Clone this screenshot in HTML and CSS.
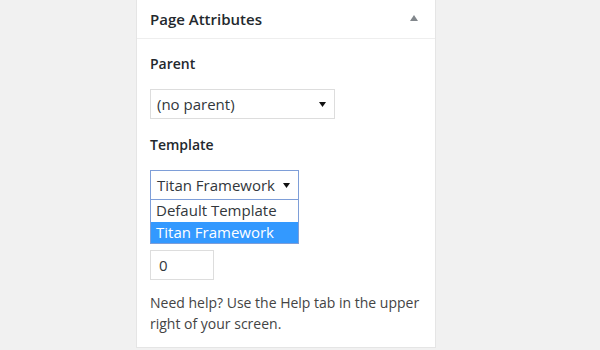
FILE: index.html
```html
<!DOCTYPE html>
<html lang="en">
<head>
    <meta charset="utf-8">
    <title>Page Attributes</title>
    <link rel="stylesheet" href="styles.css">
</head>
<body>
    <div class="postbox">
        <div class="postbox-header">
            <h2>Page Attributes</h2>
            <svg class="toggle" width="10" height="8" viewBox="0 0 10 8"><path d="M1 7 L5 1 L9 7 Z" fill="#82878c"/></svg>
        </div>
        <div class="inside">
            <p class="label">Parent</p>
            <div class="select parent-select">
                <span>(no parent)</span>
                <svg class="arrow" width="7" height="5" viewBox="0 0 7 5"><path d="M0 0 H7 L3.5 5 Z" fill="#111"/></svg>
            </div>
            <p class="label">Template</p>
            <div class="dropdown">
                <div class="select template-select is-open">
                    <span>Titan Framework</span>
                    <svg class="arrow" width="7" height="5" viewBox="0 0 7 5"><path d="M0 0 H7 L3.5 5 Z" fill="#111"/></svg>
                </div>
                <ul class="options">
                    <li>Default Template</li>
                    <li class="selected">Titan Framework</li>
                </ul>
            </div>
            <input class="order-input" type="text" value="0">
            <p class="help">Need help? Use the Help tab in the upper right of your screen.</p>
        </div>
    </div>
</body>
</html>
```

FILE: styles.css
```css
* {
    box-sizing: border-box;
    margin: 0;
    padding: 0;
}

body {
    background-color: #f1f1f1;
    font-family: 'Open Sans', sans-serif;
    color: #444;
    font-size: 14px;
}

.postbox {
    width: 300px;
    height: 348px;
    margin-left: 136px;
    background-color: white;
    border: 1px solid #e5e5e5;
    border-top: none;
}

.postbox-header {
    height: 39px;
    display: flex;
    align-items: center;
    justify-content: space-between;
    padding: 0 16px 0 13px;
    border-bottom: 1px solid #eee;
}

.postbox-header h2 {
    font-size: 15px;
    font-weight: 600;
    color: #23282d;
}

.toggle {
    margin-top: -2px;
}

.inside {
    padding: 15px 12px 0 13px;
}

.label {
    font-size: 14px;
    font-weight: 600;
    color: #23282d;
    line-height: 20px;
    margin-bottom: 15px;
}

.select {
    display: flex;
    align-items: center;
    justify-content: space-between;
    height: 30px;
    padding: 0 6px 0 6px;
    border: 1px solid #ddd;
    background: white;
    color: #32373c;
    font-size: 15px;
}

.parent-select {
    width: 185px;
    margin-bottom: 16px;
}

.template-select {
    width: 149px;
}

.template-select.is-open {
    border-color: #7e9ed8;
}

.arrow {
    margin-right: 2px;
}

.options {
    width: 149px;
    list-style: none;
    border: 1px solid #7e9ed8;
    border-top: none;
    font-size: 15px;
    color: #32373c;
}

.options li {
    height: 21.5px;
    line-height: 21px;
    padding-left: 5px;
}

.options li.selected {
    background-color: #3399ff;
    color: white;
}

.order-input {
    display: block;
    width: 64px;
    height: 30px;
    margin-top: 6px;
    padding: 0 8px;
    border: 1px solid #ddd;
    font-family: 'Open Sans', sans-serif;
    font-size: 15px;
    color: #32373c;
}

.help {
    margin-top: 12px;
    line-height: 21px;
    font-size: 14px;
    color: #444;
}
```
